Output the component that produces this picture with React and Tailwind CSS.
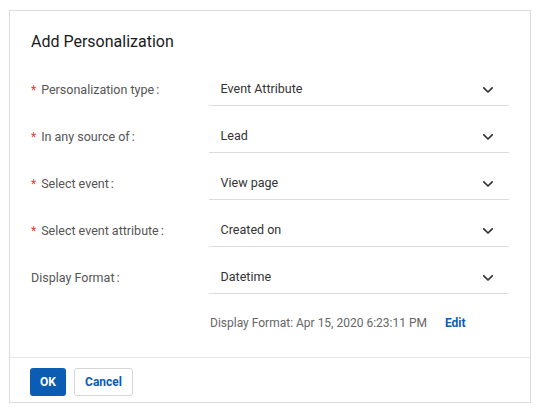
import React from 'react';

const rows = [
  { label: 'Personalization type', value: 'Event Attribute', required: true },
  { label: 'In any source of', value: 'Lead', required: true },
  { label: 'Select event', value: 'View page', required: true },
  { label: 'Select event attribute', value: 'Created on', required: true },
  { label: 'Display Format', value: 'Datetime', required: false },
];

function Chevron() {
  return (
    <svg width="12" height="8" viewBox="0 0 12 8" fill="none">
      <path d="M1.8 1.8L6 6l4.2-4.2" stroke="#333" strokeWidth="1.7" strokeLinecap="round" strokeLinejoin="round" />
    </svg>
  );
}

export default function App() {
  return (
    <div className="min-h-screen bg-white pl-[9px] pt-[10px] font-['Roboto',sans-serif]">
      <div className="w-[522px] h-[393px] border border-[#dcdcdc] flex flex-col">
        <div className="flex-1 px-[21px] pt-[19px]">
          <h2 className="text-[16px] leading-[24px] font-normal text-[#1a1a1a]">Add Personalization</h2>

          <div className="mt-[20px] flex flex-col gap-[15px]">
            {rows.map(r => (
              <div key={r.label} className="flex items-center">
                <div className="w-[178px] flex items-center text-[12.5px] text-[#555]">
                  {r.required && <span className="text-[#e53935] mr-[5px] text-[12px]">*</span>}
                  <span>{r.label}</span>
                  <span className="ml-[2px]">:</span>
                </div>
                <div className="w-[301px] h-[32px] border-b border-[#dcdcdc] flex items-center justify-between pl-[12px] pr-[15px] text-[12.5px] text-[#333]">
                  <span>{r.value}</span>
                  <Chevron />
                </div>
              </div>
            ))}
          </div>

          <div className="mt-[21px] pl-[179px] flex items-center text-[12px] leading-[16px]">
            <span className="text-[#666]">Display Format: Apr 15, 2020 6:23:11 PM</span>
            <span className="ml-[18px] text-[#0b5cb3] font-bold">Edit</span>
          </div>
        </div>

        <div className="h-[45px] border-t border-[#e5e5e5] pl-[20px] pt-[10px] flex gap-[8px]">
          <button className="h-[28px] w-[36px] rounded-[3px] bg-[#0b5cb3] text-white text-[12px] font-bold">OK</button>
          <button className="h-[28px] w-[59px] rounded-[3px] border border-[#d6d6d6] bg-white text-[#0b5cb3] text-[12px] font-bold">Cancel</button>
        </div>
      </div>
    </div>
  );
}
